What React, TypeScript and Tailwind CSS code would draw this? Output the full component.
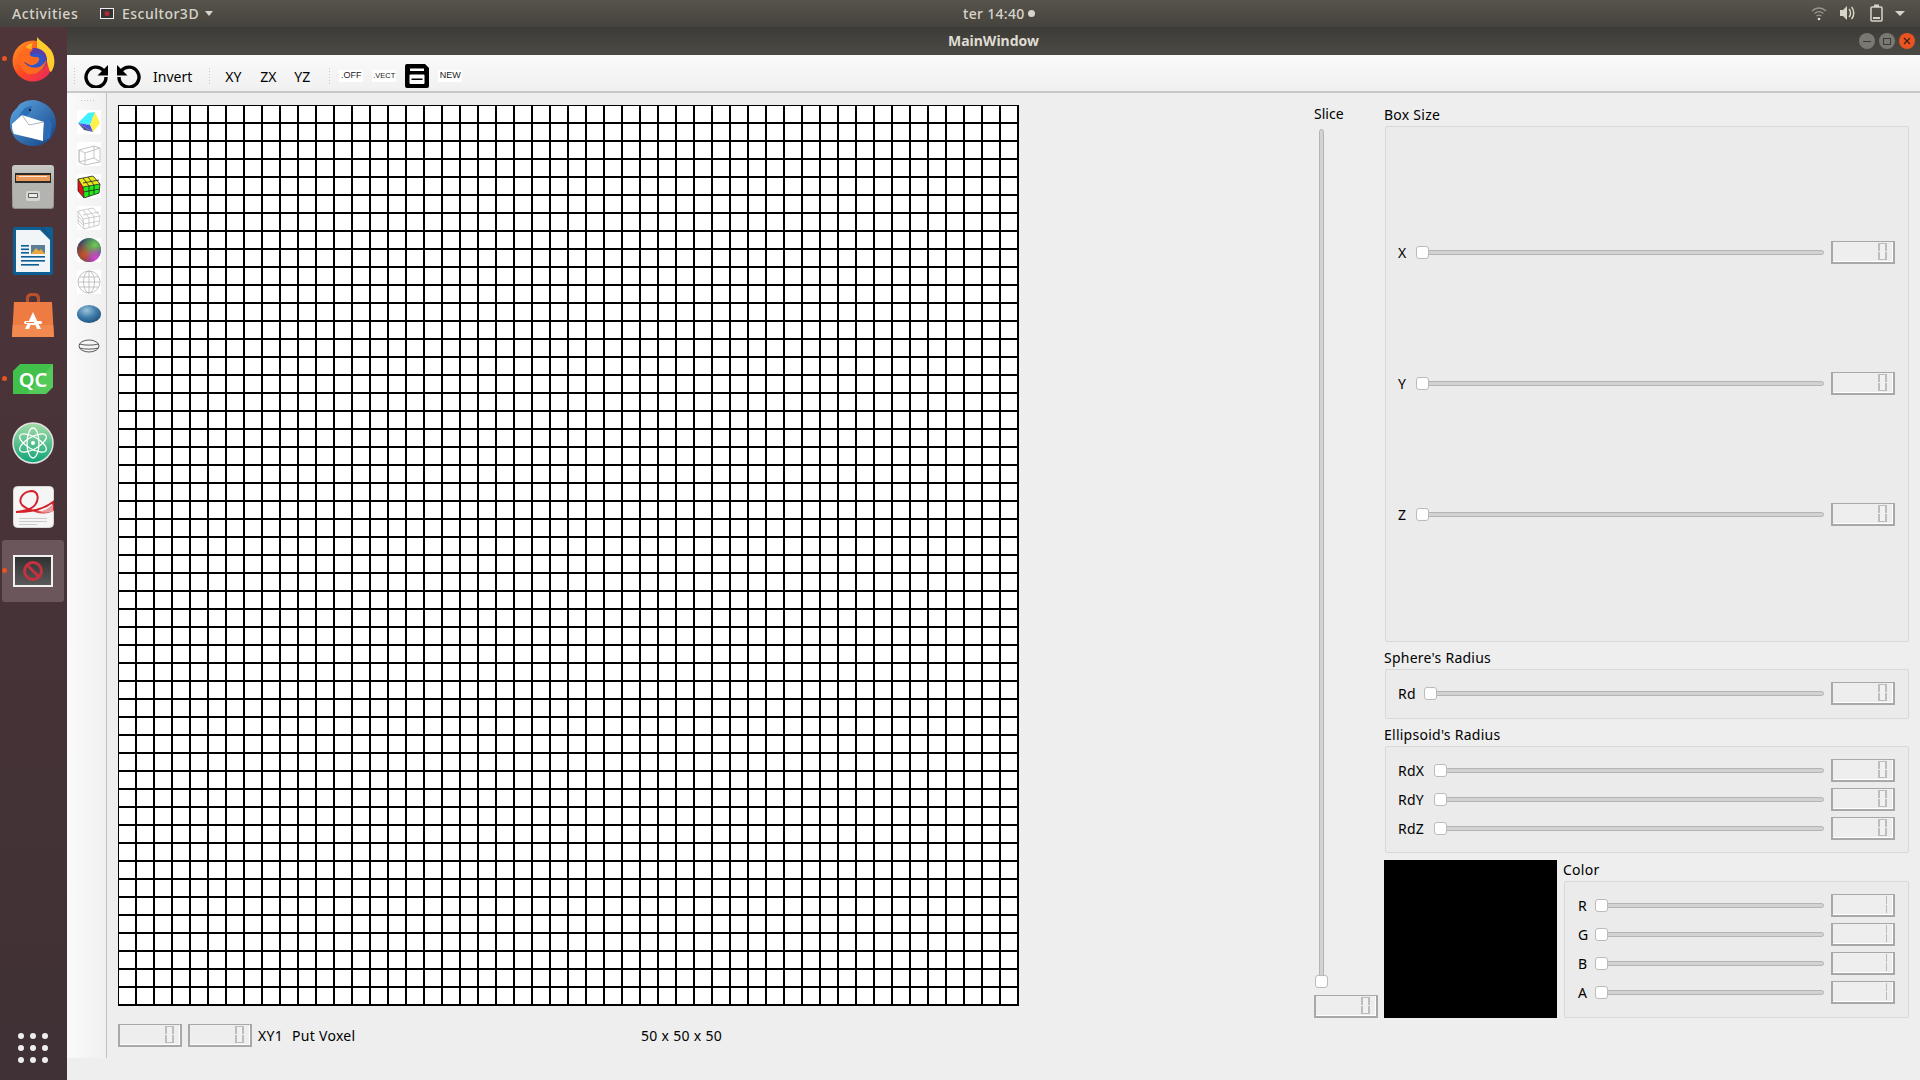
import type { ReactNode } from "react"

const uiFont = "font-['Noto_Sans','Open_Sans',sans-serif]"

function Grip({ vertical = false }: { vertical?: boolean }) {
  return (
    <div
      className={
        vertical
          ? "w-[16px] h-[4px] bg-[radial-gradient(#c4c4c4_1px,transparent_1px)] bg-[length:3px_3px]"
          : "w-[4px] h-[18px] bg-[radial-gradient(#c4c4c4_1px,transparent_1px)] bg-[length:3px_3px]"
      }
    />
  )
}

function Spin({ split = true }: { split?: boolean }) {
  return (
    <div className="w-[64px] h-[23px] border-t border-l-2 border-b-2 border-r-2 border-[#a8a8a8] bg-[#eeeeee] shrink-0">
      <div className="h-full flex justify-end pr-[5px] border-r border-b border-white">
        {split ? (
          <div className="w-[9px] flex flex-col justify-between my-[1px]">
            <div className="h-[8px] border-t border-x-2 border-[#bdbdbd] bg-[#f1f1f1]" />
            <div className="h-[8px] border-b border-x-2 border-[#bdbdbd] bg-[#f1f1f1]" />
          </div>
        ) : (
          <div className="w-px my-[1px] bg-[linear-gradient(#bbb_45%,transparent_45%,transparent_55%,#bbb_55%)]" />
        )}
      </div>
    </div>
  )
}

function Slider({ label, labelW, split = true }: { label: string; labelW: string; split?: boolean }) {
  return (
    <div className="flex items-center h-[23px]">
      <span className={`${labelW} text-[14px] text-black shrink-0`}>{label}</span>
      <div className="relative flex-1 h-[5px] rounded-full bg-[#d2d2d2] border border-[#b4b4b4]">
        <div className="absolute left-[-1px] top-[-5px] w-[13px] h-[13px] rounded-[3px] bg-white border border-[#bbbbbb]" />
      </div>
      <div className="w-[7px] shrink-0" />
      <Spin split={split} />
    </div>
  )
}

function Fieldset({ title, titleH = "h-[23px]", className, children }: { title: string; titleH?: string; className: string; children: ReactNode }) {
  return (
    <div className="flex flex-col">
      <div className={`${titleH} ml-[-1px] flex items-center text-[14px] text-black`}>{title}</div>
      <div className={`rounded-[2px] border border-[#d8d8d8] bg-[#ebebeb] pr-[13px] flex flex-col ${className}`}>{children}</div>
    </div>
  )
}

function Firefox() {
  return (
    <svg width="46" height="46" viewBox="0 0 46 46">
      <defs>
        <linearGradient id="ff1" x1="0" y1="0" x2="1" y2="1">
          <stop offset="0" stopColor="#ff9a1f" />
          <stop offset="0.5" stopColor="#ff4a22" />
          <stop offset="1" stopColor="#e3206a" />
        </linearGradient>
      </defs>
      <circle cx="23" cy="25" r="20.5" fill="url(#ff1)" />
      <path d="M27 1c3 4 9 7 14 13 5 8 4 17 0 22-3-1-2-10-7-15-3-4-7-5-7-10z" fill="#ffce2d" />
      <circle cx="25" cy="24" r="12" fill="#5a3ea8" />
      <circle cx="26" cy="25" r="8" fill="#2f56c9" />
      <path d="M9 18c5-5 10-7 14-5-1 2-4 3-3 6 2 3 7 1 9 3 1 4-4 8-9 7-3-1-4-3-6-3 3 4 9 7 15 5 5-2 7-7 7-7 0 8-8 15-17 14C13 37 6 27 9 18z" fill="#ff6a1f" />
      <path d="M16 11c2-3 5-4 7-4-1 2-2 4-1 6-2 0-4 0-6-2z" fill="#ffb52a" />
    </svg>
  )
}

function Thunderbird() {
  return (
    <svg width="48" height="48" viewBox="0 0 48 48">
      <defs>
        <linearGradient id="tb1" x1="0" y1="0" x2="1" y2="1">
          <stop offset="0" stopColor="#5ea8e6" />
          <stop offset="1" stopColor="#123f80" />
        </linearGradient>
      </defs>
      <path d="M24 1c12 1 23 10 23 23S37 47 25 47C10 47 1 37 1 24 1 17 4 12 8 9c2-5 9-8 16-8z" fill="url(#tb1)" />
      <path d="M10 22C10 12 17 7 24 7c-3 3-3 5-3 7l-9 8z" fill="#2a6fb8" />
      <path d="M3 25l10-9 22 7-1 19-12-3-17-4c-2-3-2-7-2-10z" fill="#fff" />
      <path d="M13 16l7 10 15-3" fill="none" stroke="#9aa3ad" strokeWidth="0.8" />
      <path d="M35 23l-1 19 7-3 2-14-5-8z" fill="#2c6bb4" />
      <circle cx="21" cy="11" r="1.2" fill="#10243f" />
    </svg>
  )
}

function Files() {
  return (
    <svg width="42" height="44" viewBox="0 0 42 44">
      <defs>
        <linearGradient id="fl1" x1="0" y1="0" x2="0" y2="1">
          <stop offset="0" stopColor="#c9c9c6" />
          <stop offset="1" stopColor="#8b8b88" />
        </linearGradient>
      </defs>
      <rect x="0" y="0" width="42" height="44" rx="3" fill="url(#fl1)" />
      <rect x="3" y="8" width="36" height="10" fill="#2b2b2b" />
      <rect x="4" y="10" width="34" height="6" fill="#e9995a" />
      <rect x="7" y="11" width="28" height="1" fill="#f7e3cf" />
      <rect x="1" y="18" width="40" height="25" rx="2" fill="#b3b3b0" />
      <rect x="14" y="26" width="14" height="10" rx="2" fill="#d6d6d3" />
      <rect x="16" y="28" width="10" height="5" rx="1" fill="#5e5e5c" />
      <rect x="17" y="29" width="8" height="3" fill="#ececec" />
    </svg>
  )
}

function Writer() {
  return (
    <svg width="40" height="48" viewBox="0 0 40 48">
      <path d="M2 0h26l12 12v34a2 2 0 0 1-2 2H2a2 2 0 0 1-2-2V2a2 2 0 0 1 2-2z" fill="#0d5e92" />
      <path d="M3 3h24l10 10v32H3z" fill="#f2f5f7" />
      <path d="M29 0h9a2 2 0 0 1 2 2v10z" fill="#0d5e92" />
      <rect x="18" y="18" width="14" height="9" fill="#5c7f99" />
      <path d="M18 27l5-6 3 3 2-2 4 5z" fill="#e8a93c" />
      <g fill="#0d5e92">
        <rect x="8" y="18" width="8" height="1.6" />
        <rect x="8" y="21.5" width="8" height="1.6" />
        <rect x="8" y="25" width="8" height="1.6" />
        <rect x="8" y="29" width="24" height="1.6" />
        <rect x="8" y="33" width="24" height="1.6" />
        <rect x="8" y="37" width="18" height="1.6" />
      </g>
    </svg>
  )
}

function Store() {
  return (
    <svg width="42" height="44" viewBox="0 0 42 44">
      <path d="M14 10V5a5 5 0 0 1 5-5h4a5 5 0 0 1 5 5v5h-3V6a3 3 0 0 0-3-3h-2a3 3 0 0 0-3 3v4z" fill="#b8502b" />
      <path d="M2 9h38l2 35H0z" fill="#ee7b41" />
      <path d="M0.8 32h40.4l.8 12H0z" fill="#f28a50" />
      <path d="M21 19l8 17h-4l-1.500-4h-5L17 36h-4z" fill="#fff" />
      <rect x="12" y="28" width="18" height="3" rx="1.500" fill="#fff" />
      <rect x="14" y="29" width="8" height="1" fill="#ee7b41" />
    </svg>
  )
}

function Qc() {
  return (
    <svg width="40" height="30" viewBox="0 0 40 30">
      <path d="M7 0h33v23l-7 7H0V7z" fill="#41c14a" />
      <path d="M40 0v23l-7 7H14z" fill="#5fd066" opacity="0.6" />
      <text x="20" y="23" textAnchor="middle" fontSize="20" fontWeight="600" fill="#fff" fontFamily="Noto Sans, sans-serif">QC</text>
    </svg>
  )
}

function Atom() {
  return (
    <svg width="42" height="42" viewBox="0 0 42 42">
      <defs>
        <linearGradient id="at1" x1="0" y1="0" x2="0" y2="1">
          <stop offset="0" stopColor="#a5dca6" />
          <stop offset="1" stopColor="#0fa578" />
        </linearGradient>
      </defs>
      <circle cx="21" cy="21" r="20" fill="url(#at1)" stroke="#e4e4e4" strokeWidth="1.500" />
      <g fill="none" stroke="#fff" strokeWidth="1.300">
        <ellipse cx="21" cy="21" rx="15" ry="6" transform="rotate(30 21 21)" />
        <ellipse cx="21" cy="21" rx="15" ry="6" transform="rotate(-30 21 21)" />
        <ellipse cx="21" cy="21" rx="15" ry="6" transform="rotate(90 21 21)" />
      </g>
      <circle cx="21" cy="21" r="2" fill="#fff" />
    </svg>
  )
}

function Evince() {
  return (
    <svg width="41" height="42" viewBox="0 0 41 42">
      <rect x="0.500" y="0.500" width="40" height="41" rx="4" fill="#f5f5f5" stroke="#d8d8d8" />
      <path d="M40 16c-10 8-26 10-37 10 10-1 16-3 19-7C26 14 26 5 18 5 9 6 5 14 9 19c4 4 8 5 13 6 6 2 13 2 18-1z" fill="none" stroke="#d3232a" strokeWidth="2" />
      <path d="M20 25c6 2 13 0 20-7v8c-6 1-14 1-20-1z" fill="#e99a9d" />
      <g fill="#c9c9c9">
        <rect x="6" y="32" width="28" height="1" />
        <rect x="6" y="35" width="28" height="1" />
        <rect x="6" y="38" width="18" height="1" />
      </g>
    </svg>
  )
}

function AppIcon() {
  return (
    <svg width="40" height="32" viewBox="0 0 40 32">
      <defs>
        <linearGradient id="ap1" x1="0" y1="0" x2="0" y2="1">
          <stop offset="0" stopColor="#2f2f2f" />
          <stop offset="1" stopColor="#5a5a5a" />
        </linearGradient>
      </defs>
      <rect x="1" y="1" width="38" height="30" fill="url(#ap1)" stroke="#f0f0f0" strokeWidth="2" />
      <circle cx="20" cy="16" r="8.500" fill="none" stroke="#c3323f" strokeWidth="3" />
      <path d="M14 10l12 12" stroke="#c3323f" strokeWidth="3" />
    </svg>
  )
}

const dockItems = [
  { icon: <Firefox />, dot: true },
  { icon: <Thunderbird /> },
  { icon: <Files /> },
  { icon: <Writer /> },
  { icon: <Store /> },
  { icon: <Qc />, dot: true },
  { icon: <Atom /> },
  { icon: <Evince /> },
  { icon: <AppIcon />, dot: true, active: true },
]

function Dock() {
  return (
    <div className="w-[67px] shrink-0 flex flex-col bg-[linear-gradient(#4f353a,#3f3135)]">
      {dockItems.map((d, i) => (
        <div key={i} className="relative h-[64px] pr-[1px] flex items-center justify-center">
          {d.active && <div className="absolute left-[2px] right-[3px] top-[1px] bottom-[1px] rounded-[3px] bg-[#6a565b]" />}
          {d.dot && <div className="absolute left-[2px] top-[29px] w-[5px] h-[5px] rounded-full bg-[#e95420]" />}
          <div className="relative flex">{d.icon}</div>
        </div>
      ))}
      <div className="mt-auto mb-[17px] ml-[18px] grid grid-cols-[repeat(3,6px)] gap-[6px]">
        {Array.from({ length: 9 }).map((_, i) => (
          <div key={i} className="w-[6px] h-[6px] rounded-full bg-[#eeeeee]" />
        ))}
      </div>
    </div>
  )
}

function TopBar() {
  return (
    <div className="h-[27px] shrink-0 pb-[1px] flex items-center bg-[linear-gradient(#57544c,#45433d)] text-[#d8d4ca] text-[14px] font-medium relative">
      <span className="ml-[12px] w-[88px] tracking-[0.6px]">Activities</span>
      <svg width="14" height="11" viewBox="0 0 14 11">
        <rect x="0.500" y="0.500" width="13" height="10" fill="#333" stroke="#eee" />
        <circle cx="7" cy="5.500" r="2.500" fill="#b02a35" />
      </svg>
      <span className="ml-[8px] tracking-[0.5px]">Escultor3D</span>
      <div className="ml-[6px] w-0 h-0 border-x-[4.500px] border-x-transparent border-t-[5px] border-t-[#d8d4ca]" />
      <div className="absolute left-[963px] top-0 h-[26px] flex items-center gap-[3px] tracking-[0.3px]">
        <span>ter 14:40</span>
        <div className="w-[7px] h-[7px] rounded-full bg-[#d8d4ca]" />
      </div>
      <div className="ml-auto mr-[15px] flex items-center gap-[12px]">
        <svg width="16" height="16" viewBox="0 0 16 16" fill="none" stroke="#c8c5bc" strokeWidth="1.300">
          <path d="M1 6c4-4 10-4 14 0" opacity="0.6" />
          <path d="M3.500 8.500c3-2.500 6-2.500 9 0" opacity="0.6" />
          <path d="M5.500 11c2-1.500 3-1.500 5 0" opacity="0.6" />
          <circle cx="8" cy="14" r="1.300" fill="#e0ddd5" stroke="none" />
        </svg>
        <svg width="17" height="16" viewBox="0 0 17 16" fill="#d8d4ca" className="mr-[2px]">
          <path d="M1 5h3l4-4v14l-4-4H1z" />
          <path d="M10 4c2 2 2 6 0 8M12.500 2c3 3 3 9 0 12" fill="none" stroke="#d8d4ca" strokeWidth="1.500" />
        </svg>
        <svg width="13" height="18" viewBox="0 0 13 18" fill="none" stroke="#d8d4ca" strokeWidth="1.500">
          <rect x="1" y="3" width="11" height="14" rx="1" />
          <rect x="4" y="0.500" width="5" height="2.500" fill="#d8d4ca" stroke="none" />
          <rect x="3" y="13" width="7" height="2" fill="#d8d4ca" stroke="none" />
        </svg>
        <div className="w-0 h-0 border-x-[5px] border-x-transparent border-t-[5px] border-t-[#d8d4ca]" />
      </div>
    </div>
  )
}

function TitleBar() {
  return (
    <div className="h-[28px] shrink-0 pb-[2px] relative flex items-center justify-center bg-[linear-gradient(#3c3b37,#4c4a44)] text-[#dfdbd2] text-[14px] font-bold tracking-normal">
      MainWindow
      <div className="absolute right-[5px] top-[6px] flex gap-[4px]">
        <div className="w-[16px] h-[16px] rounded-full bg-[#7a7873] flex items-center justify-center">
          <div className="w-[8px] h-px bg-[#3c3b37]" />
        </div>
        <div className="w-[16px] h-[16px] rounded-full bg-[#7a7873] flex items-center justify-center">
          <div className="w-[8px] h-[7px] border border-[#3c3b37]" />
        </div>
        <div className="w-[16px] h-[16px] rounded-full bg-[#e95420] flex items-center justify-center">
          <svg width="8" height="8" viewBox="0 0 8 8" stroke="#3c2015" strokeWidth="1.200">
            <path d="M1 1l6 6M7 1l-6 6" />
          </svg>
        </div>
      </div>
    </div>
  )
}

function Redo({ flip = false }: { flip?: boolean }) {
  return (
    <svg width="24" height="24" viewBox="0 0 24 24" className={flip ? "-scale-x-100" : ""}>
      <path d="M19.500 6.500A10 10 0 1 0 22 13" fill="none" stroke="#000" strokeWidth="3.400" />
      <path d="M24 1v10.500h-10.500z" fill="#000" />
    </svg>
  )
}

function Tag({ text, size = "text-[9px]" }: { text: string; size?: string }) {
  return (
    <div className={`w-[24px] h-[12px] bg-white flex items-center justify-center ${size} text-[#222] font-['Liberation_Sans',sans-serif]`}>
      {text}
    </div>
  )
}

function Toolbar() {
  return (
    <div className="h-[38px] shrink-0 flex items-center pl-[6px] pt-[6px] border-b-2 border-[#c8c8c8] bg-[linear-gradient(#fafafa,#f0f0f0)] text-[14px] text-black">
      <Grip />
      <div className="ml-[7px]"><Redo /></div>
      <div className="ml-[9px]"><Redo flip /></div>
      <span className="ml-[12px]">Invert</span>
      <div className="ml-[16px]"><Grip /></div>
      <span className="ml-[13px] w-[35px]">XY</span>
      <span className="w-[34px]">ZX</span>
      <span className="w-[34px]">YZ</span>
      <Grip />
      <div className="ml-[7px]"><Tag text=".OFF" /></div>
      <div className="ml-[9px]"><Tag text=".VECT" size="text-[7.5px]" /></div>
      <svg className="ml-[9px]" width="24" height="24" viewBox="0 0 24 24">
        <path d="M2 0h18l4 4v18a2 2 0 0 1-2 2H2a2 2 0 0 1-2-2V2a2 2 0 0 1 2-2z" fill="#000" />
        <rect x="5" y="4.500" width="14" height="2.500" fill="#fff" />
        <rect x="4.500" y="10.500" width="15" height="9.500" rx="1" fill="#fff" />
        <rect x="6.500" y="14.500" width="11" height="1.500" fill="#000" />
      </svg>
      <div className="ml-[9px]"><Tag text="NEW" /></div>
    </div>
  )
}

function CubeFaces() {
  return (
    <svg width="24" height="24" viewBox="0 0 24 24" className="bg-white">
      <path d="M1 13L11 3l7-1-5 13z" fill="#3ff0ff" />
      <path d="M18 2l5 11-7 9-3-7z" fill="#fff04a" />
      <path d="M1 13l12 2 3 7z" fill="#4a55e8" />
      <path d="M1 13l6 7 9 2z" fill="#555a8a" />
    </svg>
  )
}

function WireCube() {
  return (
    <svg width="24" height="24" viewBox="0 0 24 24" fill="none" stroke="#c4c4c4" className="bg-white">
      <path d="M2 8l15-4 6 2v14l-15 3-6-3zM2 8l6 3 15-5M8 11v12M2 20V8M17 4v12l-15 4M17 16l6 4" />
    </svg>
  )
}

function Rubik() {
  return (
    <svg width="24" height="24" viewBox="0 0 24 24" className="bg-white">
      <path d="M1 5l5 8 1 11-6-7z" fill="#e81010" />
      <path d="M6 13l17-3-1 9-15 5z" fill="#22e81a" />
      <path d="M1 5l15-3 7 8-17 3z" fill="#e8e820" />
      <g stroke="#222" strokeWidth="0.800" fill="none">
        <path d="M1 5l5 8 17-3-7-8zM6 13l1 11 15-5 1-9M1 5l0 12 6 7M12 12l0 10M17 11l0 9M6 9l16-3M11 3l6 8M6 4l6 8M6.500 18l16-3" />
      </g>
    </svg>
  )
}

function WireRubik() {
  return (
    <svg width="24" height="24" viewBox="0 0 24 24" className="bg-white">
      <g stroke="#c0c0c0" strokeWidth="0.800" fill="none">
        <path d="M1 5l5 8 17-3-7-8zM6 13l1 10 15-4 1-9M1 5l0 12 6 6M12 12l0 9M17 11l0 9M6 9l16-3M11 3l6 8M6 4l6 8M6.500 18l16-3M1 10l6 7M1 14l6 6" />
      </g>
    </svg>
  )
}

function RainbowBall() {
  return (
    <svg width="24" height="24" viewBox="0 0 24 24" className="bg-white">
      <defs>
        <radialGradient id="rb1" cx="0.3" cy="0.7" r="0.6">
          <stop offset="0" stopColor="#d05020" />
          <stop offset="1" stopColor="#d05020" stopOpacity="0" />
        </radialGradient>
        <radialGradient id="rb2" cx="0.75" cy="0.3" r="0.6">
          <stop offset="0" stopColor="#70d050" />
          <stop offset="1" stopColor="#70d050" stopOpacity="0" />
        </radialGradient>
        <radialGradient id="rb3" cx="0.8" cy="0.85" r="0.5">
          <stop offset="0" stopColor="#e040e0" />
          <stop offset="1" stopColor="#e040e0" stopOpacity="0" />
        </radialGradient>
      </defs>
      <circle cx="12" cy="12" r="12" fill="#304070" />
      <circle cx="12" cy="12" r="12" fill="url(#rb1)" />
      <circle cx="12" cy="12" r="12" fill="url(#rb2)" />
      <circle cx="12" cy="12" r="12" fill="url(#rb3)" />
    </svg>
  )
}

function WireBall() {
  return (
    <svg width="24" height="24" viewBox="0 0 24 24" fill="none" stroke="#b4b4b4" strokeWidth="0.800" className="bg-white">
      <circle cx="12" cy="12" r="11" />
      <ellipse cx="12" cy="12" rx="5.500" ry="11" />
      <path d="M12 1v22M1 12h22M2.500 7h19M2.500 17h19" />
    </svg>
  )
}

function Ellipsoid() {
  return (
    <svg width="24" height="24" viewBox="0 0 24 24">
      <defs>
        <radialGradient id="el1" cx="0.4" cy="0.3" r="0.8">
          <stop offset="0" stopColor="#9cc4dc" />
          <stop offset="0.5" stopColor="#3f7cab" />
          <stop offset="1" stopColor="#184a72" />
        </radialGradient>
      </defs>
      <ellipse cx="12" cy="12" rx="12" ry="9" fill="url(#el1)" />
    </svg>
  )
}

function WireEllipsoid() {
  return (
    <svg width="24" height="24" viewBox="0 0 24 24" fill="none" stroke="#333" strokeWidth="0.800">
      <ellipse cx="12" cy="12" rx="10" ry="6" />
      <path d="M2.500 10c5 1.500 14 1.500 19 0M2.500 14c5 1.500 14 1.500 19 0" />
    </svg>
  )
}

function SideTools() {
  const icons = [<CubeFaces />, <WireCube />, <Rubik />, <WireRubik />, <RainbowBall />, <WireBall />, <Ellipsoid />, <WireEllipsoid />]
  return (
    <div className="w-[40px] h-[965px] shrink-0 flex flex-col pl-[10px] border-r border-[#c0c0c0] bg-[linear-gradient(90deg,#fafafa,#f0f0f0)]">
      <div className="mt-[6px] mb-[7px] ml-[3px]"><Grip vertical /></div>
      <div className="flex flex-col gap-[8px]">
        {icons.map((icon, i) => (
          <div key={i} className="flex">{icon}</div>
        ))}
      </div>
    </div>
  )
}

function Canvas() {
  return (
    <div className="w-[901px] h-[901px] bg-white bg-[linear-gradient(#000_2px,transparent_2px),linear-gradient(90deg,#000_2px,transparent_2px)] bg-[length:18px_18px] bg-[position:-1px_-1px]" />
  )
}

function RightPanel() {
  return (
    <div className="flex-1 flex flex-col tracking-[0.25px]">
      <Fieldset title="Box Size" className="h-[516px] pl-[12px] pt-[114px] gap-[108px]">
        <Slider label="X" labelW="w-[18px]" />
        <Slider label="Y" labelW="w-[18px]" />
        <Slider label="Z" labelW="w-[18px]" />
      </Fieldset>
      <div className="h-[4px]" />
      <Fieldset title="Sphere's Radius" className="h-[50px] pl-[12px] pb-[2px] justify-center">
        <Slider label="Rd" labelW="w-[26px]" />
      </Fieldset>
      <div className="h-[4px]" />
      <Fieldset title="Ellipsoid's Radius" className="h-[107px] pl-[12px] justify-center gap-[6px]">
        <Slider label="RdX" labelW="w-[36px]" />
        <Slider label="RdY" labelW="w-[36px]" />
        <Slider label="RdZ" labelW="w-[36px]" />
      </Fieldset>
      <div className="flex mt-[7px] ml-[-1px]">
        <div className="w-[173px] h-[158px] bg-black shrink-0" />
        <div className="flex-1 ml-[7px]">
          <Fieldset title="Color" titleH="h-[21px] pb-[2px]" className="h-[137px] pl-[13px] pb-[2px] justify-center gap-[6px]">
            <Slider label="R" labelW="w-[17px]" split={false} />
            <Slider label="G" labelW="w-[17px]" split={false} />
            <Slider label="B" labelW="w-[17px]" split={false} />
            <Slider label="A" labelW="w-[17px]" split={false} />
          </Fieldset>
        </div>
      </div>
    </div>
  )
}

function SliceColumn() {
  return (
    <div className="w-[64px] flex flex-col items-start shrink-0">
      <div className="h-[23px] mt-[-1px] flex items-center text-[14px] text-black">Slice</div>
      <div className="relative ml-[5px] mt-[4px] w-[5px] h-[859px] rounded-full bg-[#d2d2d2] border border-[#b4b4b4]">
        <div className="absolute left-[-5px] bottom-[-1px] w-[13px] h-[13px] rounded-[3px] bg-white border border-[#bbbbbb]" />
      </div>
      <div className="mt-[7px]"><Spin /></div>
    </div>
  )
}

export default function App() {
  return (
    <div className={`w-[1920px] h-[1080px] overflow-hidden flex flex-col bg-[#eeeeee] ${uiFont}`}>
      <TopBar />
      <div className="flex-1 flex min-h-0">
        <Dock />
        <div className="flex-1 flex flex-col min-w-0">
          <TitleBar />
          <Toolbar />
          <div className="flex-1 flex min-h-0">
            <SideTools />
            <div className="flex-1 flex">
              <div className="w-[1207px] shrink-0 pl-[11px] pt-[12px]">
                <Canvas />
                <div className="mt-[18px] flex items-center gap-[6px] text-[14px] text-black tracking-[0.3px]">
                  <Spin />
                  <Spin />
                  <span className="w-[28px]">XY1</span>
                  <span className="w-[343px]">Put Voxel</span>
                  <span>50 x 50 x 50</span>
                </div>
              </div>
              <div className="flex-1 flex gap-[7px] pr-[11px] pt-[10px]">
                <SliceColumn />
                <RightPanel />
              </div>
            </div>
          </div>
        </div>
      </div>
    </div>
  )
}
